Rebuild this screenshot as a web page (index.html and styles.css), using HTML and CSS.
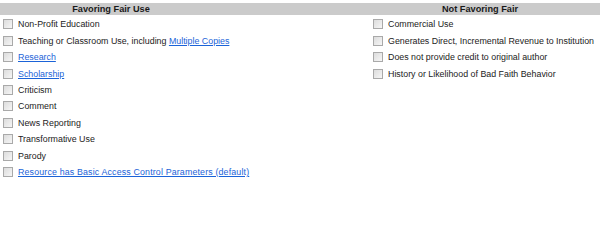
FILE: index.html
```html
<!DOCTYPE html>
<html lang="en">
<head>
  <meta charset="UTF-8">
  <title>Fair Use Factors</title>
  <link rel="stylesheet" href="styles.css">
</head>
<body>
  <div class="factors">
    <div class="factors-head">
      <div class="head-cell head-left">Favoring Fair Use</div>
      <div class="head-cell head-right">Not Favoring Fair</div>
    </div>

    <div class="factors-body">
      <ul class="factor-list list-left">
        <li><input type="checkbox" class="box"><span>Non-Profit Education</span></li>
        <li><input type="checkbox" class="box"><span>Teaching or Classroom Use, including <a href="#">Multiple Copies</a></span></li>
        <li><input type="checkbox" class="box"><span><a href="#">Research</a></span></li>
        <li><input type="checkbox" class="box"><span><a href="#">Scholarship</a></span></li>
        <li><input type="checkbox" class="box"><span>Criticism</span></li>
        <li><input type="checkbox" class="box"><span>Comment</span></li>
        <li><input type="checkbox" class="box"><span>News Reporting</span></li>
        <li><input type="checkbox" class="box"><span>Transformative Use</span></li>
        <li><input type="checkbox" class="box"><span>Parody</span></li>
        <li><input type="checkbox" class="box"><span><a href="#" class="wide-link">Resource has Basic Access Control Parameters (default)</a></span></li>
      </ul>

      <ul class="factor-list list-right">
        <li><input type="checkbox" class="box"><span>Commercial Use</span></li>
        <li><input type="checkbox" class="box"><span>Generates Direct, Incremental Revenue to Institution</span></li>
        <li><input type="checkbox" class="box"><span>Does not provide credit to original author</span></li>
        <li><input type="checkbox" class="box"><span>History or Likelihood of Bad Faith Behavior</span></li>
      </ul>
    </div>
  </div>
</body>
</html>
```

FILE: styles.css
```css
body {
  margin: 0;
  padding-top: 3px;
  background: #fff;
  color: #222;
  font-family: "Liberation Sans", Arial, sans-serif;
}
.factors-head {
  display: grid;
  grid-template-columns: 222px 138px 240px;
  background-color: #cbcbcb;
  height: 12px;
}
.head-cell {
  font-size: 9.2px;
  font-weight: bold;
  line-height: 12px;
  text-align: center;
  color: #1a1a1a;
}
.head-right {
  grid-column: 3;
}
.factors-body {
  display: grid;
  grid-template-columns: 360px 240px;
}
.factor-list {
  list-style: none;
  margin: 0;
  padding: 1px 0 0 3px;
}
.list-right {
  padding-left: 13px;
}
.factor-list li {
  display: flex;
  align-items: center;
  height: 16.45px;
  font-size: 8.85px;
  white-space: nowrap;
}
.box {
  appearance: none;
  -webkit-appearance: none;
  width: 10px;
  height: 10px;
  margin: 0 5px 0 0;
  border: 1px solid #a9a9a9;
  background: linear-gradient(135deg, #dcdcdc, #f6f6f6);
  flex-shrink: 0;
}
a {
  color: #1b63d8;
  text-decoration: underline;
}
.wide-link {
  letter-spacing: 0.15px;
}
```
